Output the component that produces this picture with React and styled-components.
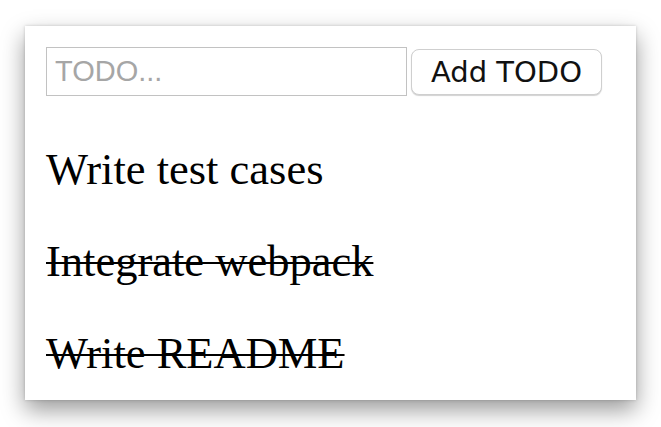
import React from "react";
import styled, { createGlobalStyle } from "styled-components";

const GlobalStyle = createGlobalStyle`
  html, body {
    margin: 0;
    padding: 0;
    background: #ffffff;
  }
  body {
    font-family: "Liberation Serif", "Times New Roman", serif;
  }
`;

const Page = styled.div`
  box-sizing: border-box;
  min-height: 427px;
  padding: 26px 25px 27px;
`;

const Window = styled.main`
  box-sizing: border-box;
  width: 611px;
  height: 374px;
  padding: 21px;
  background: #ffffff;
  box-shadow: 0 10px 22px rgba(0, 0, 0, 0.4), 0 0 3px rgba(0, 0, 0, 0.18);
`;

const Form = styled.form`
  display: flex;
  align-items: center;
  gap: 4px;
  margin: 0;
`;

const Input = styled.input`
  box-sizing: border-box;
  width: 361px;
  height: 49px;
  margin: 0;
  padding: 0 8px;
  border: 1px solid #c2c2c2;
  border-radius: 0;
  outline: none;
  font-family: "Liberation Sans", Arial, sans-serif;
  font-size: 29px;
  color: #000;
  background: #fff;

  &::placeholder {
    color: #a6a6a6;
  }
`;

const Button = styled.button`
  box-sizing: border-box;
  width: 191px;
  height: 46px;
  margin: 0;
  padding: 0;
  border: 1px solid #cfcfcf;
  border-radius: 8px;
  background: #ffffff;
  box-shadow: 0 1px 1px rgba(0, 0, 0, 0.18);
  font-family: "DejaVu Sans", Verdana, sans-serif;
  font-size: 29px;
  color: #111;
  cursor: pointer;
`;

const List = styled.ul`
  list-style: none;
  margin: 48px 0 0;
  padding: 0;
  display: flex;
  flex-direction: column;
  gap: 42px;
`;

const Item = styled.li`
  font-family: "Liberation Serif", "Times New Roman", serif;
  font-size: 44.5px;
  line-height: 50px;
  color: #000;
  text-decoration: ${(p) => (p.$done ? "line-through" : "none")};
  text-decoration-thickness: 2px;
`;

const todos = [
  { id: 1, text: "Write test cases", done: false },
  { id: 2, text: "Integrate webpack", done: true },
  { id: 3, text: "Write README", done: true },
];

export default function App() {
  return (
    <>
      <GlobalStyle />
      <Page>
        <Window>
          <Form onSubmit={(e) => e.preventDefault()}>
            <Input type="text" placeholder="TODO..." />
            <Button type="submit">Add TODO</Button>
          </Form>
          <List>
            {todos.map((t) => (
              <Item key={t.id} $done={t.done}>
                {t.text}
              </Item>
            ))}
          </List>
        </Window>
      </Page>
    </>
  );
}
